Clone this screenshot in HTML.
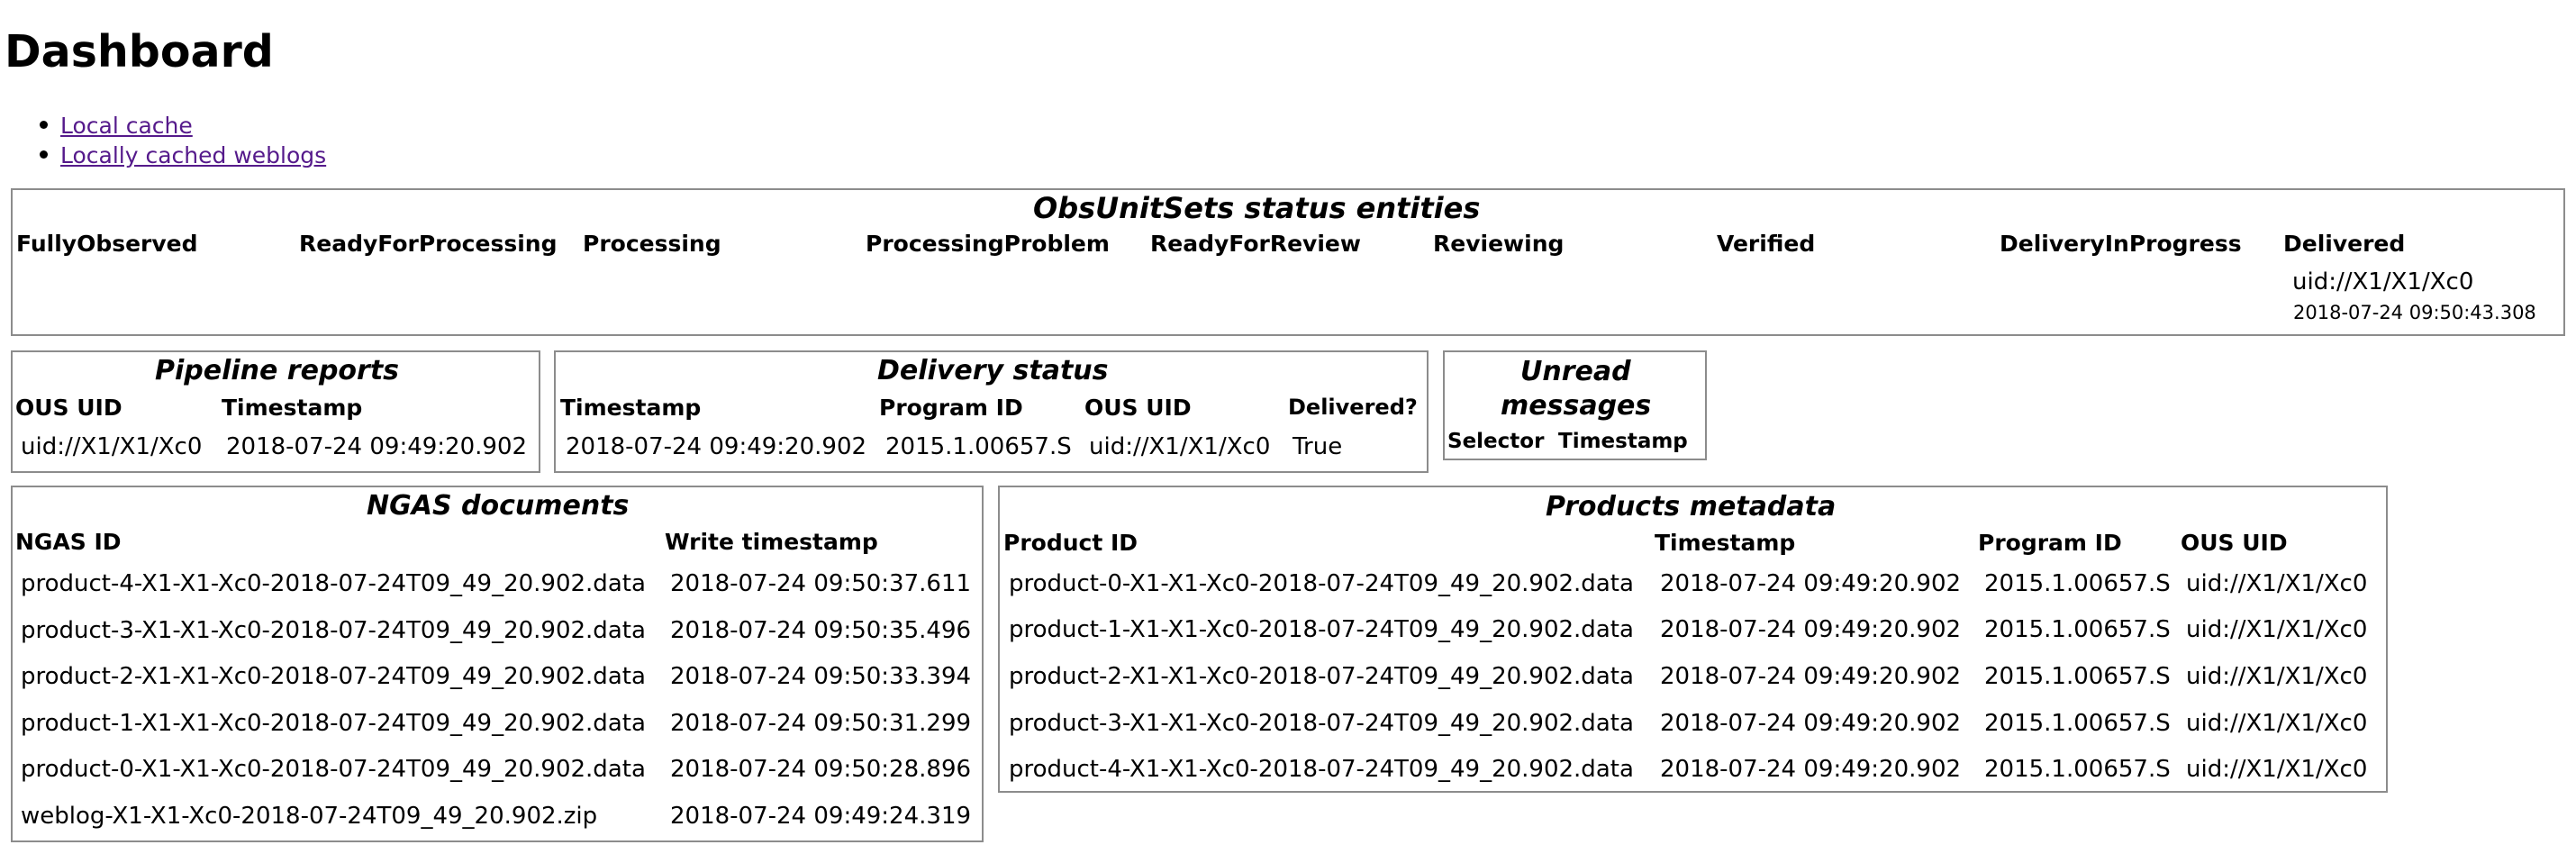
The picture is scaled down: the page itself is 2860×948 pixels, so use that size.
<!DOCTYPE html>
<html><head><meta charset="utf-8"><style>
html,body{margin:0;padding:0;background:#fff;}
body{width:2860px;height:948px;position:relative;overflow:hidden;font-family:"DejaVu Sans","Liberation Sans",sans-serif;color:#000;}
.t{position:absolute;white-space:nowrap;line-height:1;font-size:26px;}
.b{font-weight:bold;font-size:25px;}
.h{font-weight:bold;font-style:italic;font-size:30px;}
.box{position:absolute;border:2px solid #8c8c8c;box-sizing:border-box;}
a{color:#551A8B;text-decoration:underline;}
.dot{position:absolute;width:9px;height:9px;border-radius:50%;background:#000;}
</style></head><body>
<div class="t" style="left:5px;top:33px;font-size:49px;font-weight:bold;">Dashboard</div>
<div class="dot" style="left:44px;top:134px;"></div>
<div class="dot" style="left:44px;top:167px;"></div>
<div class="t" style="left:67px;top:127px;font-size:25px;"><a>Local cache</a></div>
<div class="t" style="left:67px;top:160px;font-size:25px;"><a>Locally cached weblogs</a></div>

<div class="box" style="left:12px;top:209px;width:2836px;height:164px;"></div>
<div class="t h" style="left:1147px;top:215px;font-size:32px;">ObsUnitSets status entities</div>
<div class="t b" style="left:18px;top:258px;">FullyObserved</div>
<div class="t b" style="left:332px;top:258px;">ReadyForProcessing</div>
<div class="t b" style="left:647px;top:258px;">Processing</div>
<div class="t b" style="left:961px;top:258px;">ProcessingProblem</div>
<div class="t b" style="left:1277px;top:258px;">ReadyForReview</div>
<div class="t b" style="left:1591px;top:258px;">Reviewing</div>
<div class="t b" style="left:1906px;top:258px;">Verified</div>
<div class="t b" style="left:2220px;top:258px;">DeliveryInProgress</div>
<div class="t b" style="left:2535px;top:258px;">Delivered</div>
<div class="t" style="left:2545px;top:300px;">uid://X1/X1/Xc0</div>
<div class="t" style="left:2546px;top:337px;font-size:21px;">2018-07-24 09:50:43.308</div>

<div class="box" style="left:12px;top:389px;width:588px;height:136px;"></div>
<div class="t h" style="left:172px;top:397px;">Pipeline reports</div>
<div class="t b" style="left:17px;top:440px;">OUS UID</div>
<div class="t b" style="left:246px;top:440px;">Timestamp</div>
<div class="t" style="left:23px;top:483px;">uid://X1/X1/Xc0</div>
<div class="t" style="left:251px;top:483px;">2018-07-24 09:49:20.902</div>

<div class="box" style="left:615px;top:389px;width:971px;height:136px;"></div>
<div class="t h" style="left:974px;top:397px;">Delivery status</div>
<div class="t b" style="left:622px;top:440px;">Timestamp</div>
<div class="t b" style="left:976px;top:440px;">Program ID</div>
<div class="t b" style="left:1204px;top:440px;">OUS UID</div>
<div class="t b" style="left:1430px;top:440px;font-size:24px;">Delivered?</div>
<div class="t" style="left:628px;top:483px;">2018-07-24 09:49:20.902</div>
<div class="t" style="left:983px;top:483px;">2015.1.00657.S</div>
<div class="t" style="left:1209px;top:483px;">uid://X1/X1/Xc0</div>
<div class="t" style="left:1435px;top:483px;">True</div>

<div class="box" style="left:1602px;top:389px;width:293px;height:122px;"></div>
<div class="t h" style="left:1688px;top:398px;">Unread</div>
<div class="t h" style="left:1666px;top:436px;">messages</div>
<div class="t b" style="left:1607px;top:479px;font-size:23px;">Selector</div>
<div class="t b" style="left:1730px;top:479px;font-size:23px;">Timestamp</div>

<div class="box" style="left:12px;top:539px;width:1080px;height:396px;"></div>
<div class="t h" style="left:407px;top:547px;">NGAS documents</div>
<div class="t b" style="left:17px;top:589px;">NGAS ID</div>
<div class="t b" style="left:738px;top:589px;">Write timestamp</div>
<div class="t" style="left:23px;top:635px;">product-4-X1-X1-Xc0-2018-07-24T09_49_20.902.data</div>
<div class="t" style="left:744px;top:635px;">2018-07-24 09:50:37.611</div>
<div class="t" style="left:23px;top:687px;">product-3-X1-X1-Xc0-2018-07-24T09_49_20.902.data</div>
<div class="t" style="left:744px;top:687px;">2018-07-24 09:50:35.496</div>
<div class="t" style="left:23px;top:738px;">product-2-X1-X1-Xc0-2018-07-24T09_49_20.902.data</div>
<div class="t" style="left:744px;top:738px;">2018-07-24 09:50:33.394</div>
<div class="t" style="left:23px;top:790px;">product-1-X1-X1-Xc0-2018-07-24T09_49_20.902.data</div>
<div class="t" style="left:744px;top:790px;">2018-07-24 09:50:31.299</div>
<div class="t" style="left:23px;top:841px;">product-0-X1-X1-Xc0-2018-07-24T09_49_20.902.data</div>
<div class="t" style="left:744px;top:841px;">2018-07-24 09:50:28.896</div>
<div class="t" style="left:23px;top:893px;">weblog-X1-X1-Xc0-2018-07-24T09_49_20.902.zip</div>
<div class="t" style="left:744px;top:893px;">2018-07-24 09:49:24.319</div>

<div class="box" style="left:1108px;top:539px;width:1543px;height:341px;"></div>
<div class="t h" style="left:1716px;top:548px;">Products metadata</div>
<div class="t b" style="left:1114px;top:590px;">Product ID</div>
<div class="t b" style="left:1837px;top:590px;">Timestamp</div>
<div class="t b" style="left:2196px;top:590px;">Program ID</div>
<div class="t b" style="left:2421px;top:590px;">OUS UID</div>

<div class="t" style="left:1120px;top:635px;">product-0-X1-X1-Xc0-2018-07-24T09_49_20.902.data</div>
<div class="t" style="left:1843px;top:635px;">2018-07-24 09:49:20.902</div>
<div class="t" style="left:2203px;top:635px;">2015.1.00657.S</div>
<div class="t" style="left:2427px;top:635px;">uid://X1/X1/Xc0</div>

<div class="t" style="left:1120px;top:686px;">product-1-X1-X1-Xc0-2018-07-24T09_49_20.902.data</div>
<div class="t" style="left:1843px;top:686px;">2018-07-24 09:49:20.902</div>
<div class="t" style="left:2203px;top:686px;">2015.1.00657.S</div>
<div class="t" style="left:2427px;top:686px;">uid://X1/X1/Xc0</div>

<div class="t" style="left:1120px;top:738px;">product-2-X1-X1-Xc0-2018-07-24T09_49_20.902.data</div>
<div class="t" style="left:1843px;top:738px;">2018-07-24 09:49:20.902</div>
<div class="t" style="left:2203px;top:738px;">2015.1.00657.S</div>
<div class="t" style="left:2427px;top:738px;">uid://X1/X1/Xc0</div>

<div class="t" style="left:1120px;top:790px;">product-3-X1-X1-Xc0-2018-07-24T09_49_20.902.data</div>
<div class="t" style="left:1843px;top:790px;">2018-07-24 09:49:20.902</div>
<div class="t" style="left:2203px;top:790px;">2015.1.00657.S</div>
<div class="t" style="left:2427px;top:790px;">uid://X1/X1/Xc0</div>

<div class="t" style="left:1120px;top:841px;">product-4-X1-X1-Xc0-2018-07-24T09_49_20.902.data</div>
<div class="t" style="left:1843px;top:841px;">2018-07-24 09:49:20.902</div>
<div class="t" style="left:2203px;top:841px;">2015.1.00657.S</div>
<div class="t" style="left:2427px;top:841px;">uid://X1/X1/Xc0</div>
</body></html>
